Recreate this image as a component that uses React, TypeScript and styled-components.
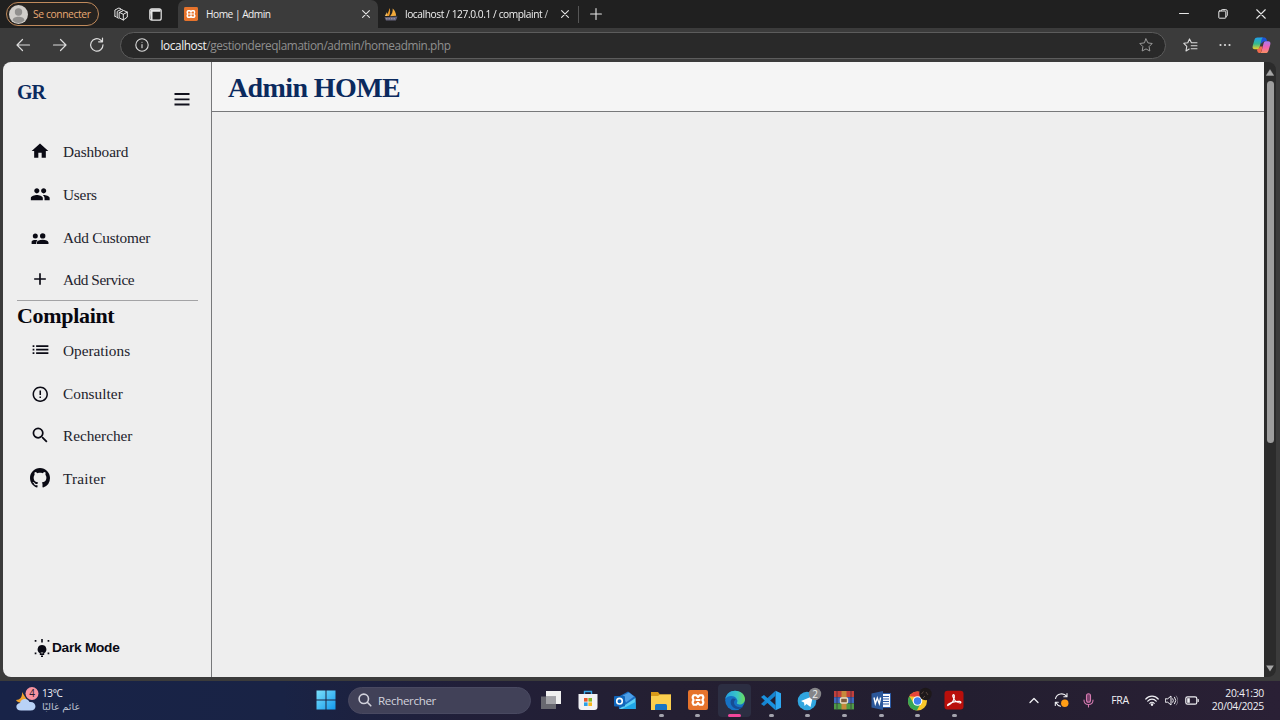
import React from 'react';
import styled, { createGlobalStyle } from 'styled-components';
import { MdHome, MdPeople, MdAdd, MdList, MdErrorOutline, MdSearch } from 'react-icons/md';
import { BsGithub } from 'react-icons/bs';

const UI = `"Open Sans", "Noto Sans", sans-serif`;
const SERIF = `"Liberation Serif", serif`;

const GlobalStyle = createGlobalStyle`
  * { box-sizing: border-box; }
  body { margin: 0; overflow: hidden; font-family: ${UI}; }
  h1, h2, p { margin: 0; }
  svg { display: block; flex: none; }
`;

const Screen = styled.div`
  width: 1280px;
  height: 720px;
  display: flex;
  flex-direction: column;
  background: #3b3b3b;
  overflow: hidden;
`;

/* Browser chrome */
const TabStrip = styled.div`
  height: 28px;
  flex: none;
  display: flex;
  align-items: center;
  background: #202020;
  color: #e6e6e6;
`;
const SignIn = styled.div`
  width: 93px;
  height: 24px;
  margin-left: 6px;
  padding-left: 2px;
  display: flex;
  align-items: center;
  gap: 5px;
  border: 1.3px solid #c08a5c;
  border-radius: 12px;
  background: #262320;
  color: #e9a873;
  font-size: 10.3px;
  letter-spacing: -0.4px;
  white-space: nowrap;
`;
const StripIcon = styled.div<{ $left: number }>`
  margin-left: ${p => p.$left}px;
`;
const Tab = styled.div<{ $active?: boolean; $width: number }>`
  width: ${p => p.$width}px;
  height: 28px;
  padding: 0 8.5px 0 6px;
  display: flex;
  align-items: center;
  border-radius: 7px 7px 0 0;
  background: ${p => (p.$active ? '#3b3b3b' : 'transparent')};
`;
const TabTitle = styled.span<{ $spacing: number; $fade?: boolean }>`
  flex: 1;
  margin: 0 4px 0 ${p => (p.$fade ? 7 : 8)}px;
  font-size: 10.2px;
  letter-spacing: ${p => p.$spacing}px;
  white-space: nowrap;
  color: #f0f0f0;
  ${p => p.$fade && 'mask-image: linear-gradient(90deg, #000 90%, rgba(0,0,0,.3));'}
`;
const Divider = styled.div`
  width: 1px;
  height: 17px;
  margin-left: 1px;
  background: #565656;
`;
const WindowButtons = styled.div`
  margin-left: auto;
  padding-right: 14px;
  display: flex;
  align-items: center;
  gap: 28.5px;
`;
const Toolbar = styled.div`
  height: 34px;
  flex: none;
  display: flex;
  align-items: center;
  padding-left: 15px;
  background: #3b3b3b;
  color: #dcdcdc;
`;
const NavButtons = styled.div`
  display: flex;
  align-items: center;
  gap: 21px;
  width: 105px;
`;
const AddressBar = styled.div`
  width: 1046px;
  height: 27px;
  padding: 0 12px 0 13.5px;
  display: flex;
  align-items: center;
  border: 1px solid #5c5c5c;
  border-radius: 14px;
  background: #292929;
`;
const Url = styled.div`
  flex: 1;
  margin-left: 12px;
  font-size: 11.8px;
  letter-spacing: -0.4px;
  color: #8f8f8f;
  b { color: #f4f4f4; font-weight: 400; }
`;
const ToolbarActions = styled.div`
  margin-left: 17px;
  display: flex;
  align-items: center;
  gap: 21px;
`;

/* Page */
const Viewport = styled.div`
  height: 615px;
  flex: none;
  margin-left: 3px;
  display: flex;
`;
const Page = styled.div`
  width: 1261px;
  display: flex;
  background: #eeeeee;
  border-radius: 8px 0 0 8px;
  overflow: hidden;
`;
const Sidebar = styled.aside`
  width: 209px;
  padding: 0 13px 0 14px;
  display: flex;
  flex-direction: column;
  border-right: 1px solid #77787a;
`;
const Brand = styled.div`
  height: 69px;
  display: flex;
  justify-content: space-between;
  color: #0b2a5e;
  font: bold 20px/30px ${SERIF};
  letter-spacing: -1px;
  padding: 15px 8.500px 0 0;
`;
const MenuIcon = styled.div`
  padding-top: 15px;
  color: #11111c;
`;
const NavList = styled.nav`
  display: flex;
  flex-direction: column;
`;
const NavItem = styled.a<{ $spacing: number }>`
  height: 42.7px;
  display: flex;
  align-items: center;
  color: #22222c;
  font: 15.3px/20px ${SERIF};
  letter-spacing: ${p => p.$spacing}px;
`;
const NavIcon = styled.span<{ $shift?: number }>`
  width: 46px;
  height: 24px;
  display: flex;
  align-items: center;
  justify-content: center;
  color: #0a0a14;
  margin-top: ${p => (p.$shift ?? 0) * 2}px;
`;
const Section = styled.h2`
  height: 30px;
  margin: -2px 0 0;
  border-top: 1px solid #a3a3a5;
  color: #07070f;
  font: bold 22px/30px ${SERIF};
  letter-spacing: -0.32px;
`;
const ModeToggle = styled.div`
  margin: auto 0 18px 17px;
  display: flex;
  align-items: center;
  gap: 2px;
  color: #0a0a14;
  font: bold 13.7px/22px "Liberation Sans", sans-serif;
  letter-spacing: -0.27px;
`;
const Main = styled.main`
  flex: 1;
`;
const MainHeader = styled.header`
  height: 50px;
  padding-left: 16px;
  background: #f5f5f5;
  border-bottom: 1px solid #77787a;
`;
const Title = styled.h1`
  color: #0b2a5e;
  font: bold 28px/52px ${SERIF};
  letter-spacing: -0.6px;
`;
const ScrollRail = styled.div`
  width: 12px;
  padding: 7px 0 5px;
  display: flex;
  flex-direction: column;
  align-items: center;
  background: #2b2b2b;
  border-radius: 0 8px 8px 0;
`;
const Thumb = styled.div`
  width: 7px;
  height: 362px;
  margin: 5px 0 auto;
  border-radius: 4px;
  background: #9d9d9d;
`;

/* Taskbar */
const Taskbar = styled.footer`
  height: 39px;
  margin-top: auto;
  padding-bottom: 1px;
  display: flex;
  align-items: center;
  background: linear-gradient(90deg, #182348 0%, #192345 22%, #211f39 36%, #241f32 52%, #231e30 75%, #2a2035 100%);
  color: #f0f0f4;
`;
const Weather = styled.div`
  width: 298px;
  padding-left: 15px;
  display: flex;
  align-items: center;
  gap: 3px;
`;
const WeatherText = styled.div`
  display: flex;
  flex-direction: column;
  font-size: 10px;
  line-height: 13px;
  letter-spacing: -0.4px;
  span { font-family: "DejaVu Sans", sans-serif; font-size: 9.8px; color: #bfc3d2; letter-spacing: 0; }
`;
const StartButton = styled.div`
  width: 50px;
  display: flex;
  padding-left: 18px;
`;
const SearchBox = styled.div`
  width: 183px;
  height: 27px;
  margin-right: 2px;
  padding-left: 8.500px;
  display: flex;
  align-items: center;
  gap: 6.500px;
  border: 1px solid #494961;
  border-radius: 14px;
  background: #414158;
  color: #d2d2dc;
  font-size: 11.6px;
  letter-spacing: -0.35px;
`;
const Apps = styled.div`
  display: flex;
`;
const AppButton = styled.div<{ $active?: boolean }>`
  width: 32.65px;
  height: 33px;
  margin: 0 2px;
  padding-top: 6px;
  display: flex;
  flex-direction: column;
  align-items: center;
  border-radius: 4px;
  background: ${p => (p.$active ? '#2c2e42' : 'transparent')};
`;
const Indicator = styled.i<{ $active?: boolean }>`
  width: ${p => (p.$active ? 13 : 5)}px;
  height: 3px;
  margin-top: 3px;
  border-radius: 2px;
  background: ${p => (p.$active ? '#f0479b' : '#a3a3ad')};
`;
const Tray = styled.div`
  margin-left: auto;
  padding-right: 16px;
  display: flex;
  align-items: center;
`;
const TrayItem = styled.div<{ $w: number }>`
  width: ${p => p.$w}px;
  display: flex;
  justify-content: center;
  font-size: 10.5px;
  letter-spacing: -0.3px;
`;
const Clock = styled.div`
  width: 60px;
  text-align: right;
  font-size: 10.4px;
  line-height: 13px;
  letter-spacing: -0.3px;
`;

const line = { fill: 'none', stroke: 'currentColor', strokeLinecap: 'round', strokeLinejoin: 'round' } as const;

const Close = ({ size = 8, w = 1.1 }) => (
  <svg width={size} height={size} viewBox="0 0 8 8" {...line} strokeWidth={w}><path d="M.6.6l6.8 6.8M7.4.6L.6 7.4" /></svg>
);
const Xampp = ({ size }: { size: number }) => (
  <svg width={size} height={size} viewBox="0 0 20 20">
    <rect width="20" height="20" rx="2" fill="#e6732c" />
    <path d="M10 7.200L8.600 5.300H5.600Q3.600 7.600 5.700 10Q3.600 12.400 5.600 14.700H8.600L10 12.800L11.400 14.700H14.400Q16.400 12.400 14.300 10Q16.400 7.600 14.400 5.300H11.400ZM8.400 10H11.600" {...line} stroke="#fff" strokeWidth="2.100" />
  </svg>
);
const PhpMyAdmin = () => (
  <svg width="14" height="14" viewBox="0 0 14 14">
    <path d="M5.500 1c1 2.300.9 5-.4 8H1.200C3.500 7.200 5 4.500 5.500 1z" fill="#e99a2c" />
    <path d="M8.700 1.600c2.200 2 3.200 4.400 3.500 7.200L6 9.200c2-2 2.900-4.600 2.700-7.600z" fill="#f2a93a" />
    <path d="M2.800 5L1 9h2z" fill="#f6c46b" />
    <path d="M.5 10.200l13-.8-1.600 4H2z" fill="#66647c" />
    <path d="M2 11.800h10" stroke="#9c9aae" strokeWidth="1.100" strokeDasharray="1.500 1" />
  </svg>
);
const Copilot = () => (
  <svg width="19" height="19" viewBox="0 0 20 19">
    <defs>
      <linearGradient id="cpA" x1="0" y1="0" x2="0" y2="1"><stop stopColor="#1f9fee" /><stop offset=".55" stopColor="#36b98c" /><stop offset="1" stopColor="#f5cf27" /></linearGradient>
      <linearGradient id="cpB" x1="0" y1="0" x2="0" y2="1"><stop stopColor="#a879f0" /><stop offset=".5" stopColor="#ee62b4" /><stop offset="1" stopColor="#fb9061" /></linearGradient>
    </defs>
    <path d="M9 1h4c1.500 0 2 1 2.400 2.300L16 5h-3.500L9 8z" fill="#1c55d8" />
    <path d="M5.800 1H12c-1.300.3-1.700 1.500-2.100 3L8.200 10.500C7.700 12.500 7 13.500 5 13.500H3C.8 13.500.2 12 .8 9.800L2.600 3.500C3.100 1.800 4 1 5.800 1z" fill="url(#cpA)" />
    <path d="M14.300 5H17c2.200 0 2.800 1.600 2.200 3.800l-1.800 6c-.5 1.800-1.400 2.700-3.200 2.700H8.300c1.200-.4 1.600-1.600 2-3L12 8c.4-1.900.9-3 2.300-3z" fill="url(#cpB)" />
    <path d="M5 13.500c2 0 2.700-1 3.200-3h3L10 15c-.4 1.500-.9 2.500-2.300 2.500-1.500 0-1.900-1.200-2.700-4z" fill="#f06b4e" />
  </svg>
);
const Bulb = () => (
  <svg width="16" height="20" viewBox="0 0 16 20" fill="#0a0a14">
    <path d="M8 7a4.400 4.400 0 0 0-2.200 8.200V17h4.400v-1.800A4.400 4.400 0 0 0 8 7z" />
    <path d="M7 17.500h2V19H7zM7.200 1h1.600v3.500H7.200zM.7 2h1.700v1.700H.7zM13.600 2h1.700v1.700h-1.700zM.7 14.500h1.700v1.700H.7zM13.600 14.500h1.700v1.700h-1.700z" />
    <path d="M6.800 14.300h2.400v1.200H6.800z" fill="#999" />
  </svg>
);
const AddCustomer = () => (
  <svg width="18" height="13" viewBox="0 0 18 13" fill="currentColor">
    <circle cx="4.300" cy="3.900" r="2.500" /><circle cx="11.700" cy="3.900" r="2.700" />
    <path d="M.6 12V9.600C1.300 8.400 2.600 8 4.300 8c1 0 1.600.1 2.200.4C5.300 9.300 5 10.500 5 12zM5.700 12v-1.500C6.300 8.600 8.600 7.700 11.700 7.700s5.400.9 5.800 2.800V12z" />
  </svg>
);

const primary = [
  { label: 'Dashboard', icon: <MdHome size={20} />, shift: -1, spacing: -0.1 },
  { label: 'Users', icon: <MdPeople size={20.5} />, shift: -1, spacing: -0.2 },
  { label: 'Add Customer', icon: <AddCustomer />, shift: 0.5, spacing: -0.2 },
  { label: 'Add Service', icon: <MdAdd size={20} />, shift: -1, spacing: -0.45 },
];
const complaint = [
  { label: 'Operations', icon: <MdList size={21} />, shift: -1.2, spacing: 0 },
  { label: 'Consulter', icon: <MdErrorOutline size={18.5} />, shift: 0.7, spacing: 0.03 },
  { label: 'Rechercher', icon: <MdSearch size={20.5} />, shift: -1.2, spacing: -0.02 },
  { label: 'Traiter', icon: <BsGithub size={20} />, shift: -0.8, spacing: 0.2 },
];

const apps: { name: string; icon: React.ReactNode; running?: boolean; active?: boolean }[] = [
  { name: 'tasks', icon: <><rect x="6" y="1" width="15" height="13" fill="#f0f0f0" /><rect x="1" y="6.500" width="15" height="12.500" fill="#686870" /><path d="M6 6.500h10V14H6z" fill="#a3a3a8" /></> },
  { name: 'store', icon: <><path d="M7.500 5V1.500h7V5" fill="none" stroke="#37a7e8" strokeWidth="1.400" /><path d="M1.500 4h19v13c0 2-1 3-3 3h-13c-2 0-3-1-3-3z" fill="#f1f2f5" /><path d="M7 8h3.600v3.600H7z" fill="#e8562c" /><path d="M11.400 8H15v3.600h-3.600z" fill="#82b727" /><path d="M7 12.400h3.600V16H7z" fill="#2aa0e6" /><path d="M11.400 12.400H15V16h-3.600z" fill="#f8b71a" /></> },
  { name: 'outlook', icon: <><path d="M4 7l10-5.500L21.500 7v12H5z" fill="#1b6fc4" /><path d="M9 5.500l6-3 5 4-8 6z" fill="#4d9fe8" /><path d="M5 19L21.500 8v11z" fill="#5bd0f5" /><path d="M8 19l13.500-7v7z" fill="#1fa5e6" /><rect x="0" y="6" width="11" height="10.500" rx="1" fill="#1065ba" /><circle cx="5.500" cy="11.200" r="2.800" fill="none" stroke="#fff" strokeWidth="1.600" /></> },
  { name: 'files', running: true, icon: <><path d="M1 2h7l2 2.500h11V8H1z" fill="#d99a18" /><path d="M1 6h7l2-1.500h11V20H1z" fill="#fbcf4f" /><path d="M5 20v-4.500q0-1.500 1.500-1.500h9q1.500 0 1.500 1.500V20z" fill="#1875c4" /></> },
  { name: 'xampp', running: true, icon: <svg x="1" y="0" width="20" height="20"><Xampp size={20} /></svg> },
  { name: 'edge', running: true, active: true, icon: <>
    <defs><linearGradient id="edA" x1="0" x2="1"><stop stopColor="#239fe3" /><stop offset=".6" stopColor="#39c6c6" /><stop offset="1" stopColor="#6cdf57" /></linearGradient></defs>
    <circle cx="11" cy="10.500" r="9.800" fill="#1672c4" />
    <path d="M1.300 9C2 4 6 .7 11 .7c6 0 10 4 10 8.300 0 3.500-2.600 5.500-5.400 5.500-1.800 0-3-.7-2.700-1.700.4-1 .7-1.400.4-2.600C12.700 7.500 10 6 7 6 4.500 6 2.500 7 1.300 9z" fill="url(#edA)" />
    <path d="M7 10c-1.500 4 1.500 8.500 6.500 9 2.800.2 4.600-1 5.700-2.500-5 2-9.200-.7-9.200-4 0-1.700 1-2.500 1.800-3C9.700 7.700 7.700 8.500 7 10z" fill="#174d94" />
  </> },
  { name: 'code', running: true, icon: <><path d="M15.500.8L21 3.200v14.600l-5.500 2.400z" fill="#2da8f2" /><path d="M15.500.8v5L4 16 1 14z" fill="#1684d0" /><path d="M15.500 20.200v-5L4 5 1 7z" fill="#1991df" /></> },
  { name: 'telegram', running: true, icon: <><circle cx="10" cy="11" r="9.300" fill="#30a5df" /><path d="M4 11l12-5-2.500 11-4-3-2 2-.5-3.500z" fill="#fff" /><circle cx="18" cy="4" r="6.200" fill="#858589" /><text x="18" y="7.800" textAnchor="middle" fontSize="10" fill="#eee">2</text></> },
  { name: 'winrar', running: true, icon: <><rect x="1" y="1" width="20" height="6" fill="#c4403b" /><rect x="1" y="7.200" width="20" height="6" fill="#3f68c0" /><rect x="1" y="13.400" width="20" height="6" fill="#4f9c45" /><rect x="8.500" y="1" width="5" height="18.400" fill="#c68a3b" /><rect x="7.500" y="8" width="7" height="5" rx="1" fill="#7d5a3c" stroke="#e9ddc5" strokeWidth="1.400" /><path d="M4 1v18M18 1v18" stroke="#302842" strokeWidth=".7" /></> },
  { name: 'word', running: true, icon: <><rect x="10" y="3.500" width="10.500" height="14" fill="#f7f9fd" stroke="#2c5ba6" /><path d="M13 6.500h6M13 9h6M13 11.500h6M13 14h6" stroke="#2c5ba6" /><path d="M1.500 3.500L13 1v19L1.500 17.500z" fill="#2b579a" /><path d="M4 7.500l1.300 6.200L7.300 8l2 5.700 1.300-6.200" fill="none" stroke="#fff" strokeWidth="1.400" /></> },
  { name: 'chrome', running: true, icon: <><circle cx="10.500" cy="11" r="9.500" fill="#f8c72b" /><path d="M2.300 6.200A9.500 9.500 0 0 1 18.700 6.200L10.500 7z" fill="#e6463b" /><path d="M2.300 6.200a9.500 9.500 0 0 0 7.500 14.300l3.500-6.500-6.500-.5z" fill="#37a755" /><circle cx="10.500" cy="11" r="4.800" fill="#fff" /><circle cx="10.500" cy="11" r="3.700" fill="#3e80ed" /><circle cx="18.500" cy="4" r="6.200" fill="#1d181a" /><path d="M14.500 4l2-2.500M19 2l2 3M16 8l2-2" stroke="#584740" /></> },
  { name: 'acrobat', running: true, icon: <><rect x="1.500" y=".8" width="19" height="18.700" rx="3" fill="#b90f0b" /><path d="M5 15.500c4-1.500 7-6.500 6.300-9.800-.4-2-2-.8-1.400 1 1 3.300 4 6 7 6.300 1.500 0 1.300-1.600-.4-1.700-4-.1-8.500 1-11.300 3-.9.700-.6 1.400-.2 1.200z" fill="none" stroke="#fff" strokeWidth="1.200" /></> },
];

export default function App() {
  return (
    <Screen>
      <GlobalStyle />
      <TabStrip>
        <SignIn>
          <svg width="19" height="19" viewBox="0 0 19 19"><circle cx="9.500" cy="9.500" r="9.500" fill="#d0ceca" /><circle cx="9.500" cy="7" r="3.700" fill="#91908e" /><path d="M3.500 15.500C4 12.500 6.500 11.800 9.500 11.800s5.500.7 6 3.700q-6 5-12 0z" fill="#91908e" /></svg>
          Se connecter
        </SignIn>
        <StripIcon $left={15}>
          <svg width="14" height="14" viewBox="0 0 14 14" {...line} strokeWidth="1"><path d="M5.500 5.400l4-1.900 3.800 1.600v5l-4 2.900-3.800-2zM5.500 5.400l3.800 1.900 4-2.200M9.300 7.300V13M3.200 10.500V4.400l4-2 1.800.8M.9 9.200V3l4-2 1.800.8M.9 9.200l1.200.7M3.200 10.500l1.200.7" /></svg>
        </StripIcon>
        <StripIcon $left={21}>
          <svg width="13" height="13" viewBox="0 0 13 13" {...line} strokeWidth="1.200"><rect x=".8" y=".8" width="11.400" height="11.400" rx="2" /><path d="M1.500 1.200h10v2.500h-10zM1 3.500h2.500V12H2z" fill="currentColor" stroke="none" /></svg>
        </StripIcon>
        <StripIcon $left={16} />
        <Tab $active $width={200}>
          <Xampp size={14} />
          <TabTitle $spacing={-0.5}>Home | Admin</TabTitle>
          <Close />
        </Tab>
        <Tab $width={199}>
          <PhpMyAdmin />
          <TabTitle $spacing={-0.42} $fade>localhost / 127.0.0.1 / complaint /</TabTitle>
          <Close />
        </Tab>
        <Divider />
        <StripIcon $left={11}>
          <svg width="12" height="12" viewBox="0 0 12 12" {...line} strokeWidth="1.100"><path d="M6 .6v10.800M.6 6h10.800" /></svg>
        </StripIcon>
        <WindowButtons>
          <svg width="10" height="10" viewBox="0 0 10 10" {...line}><path d="M.5 4.500h9" /></svg>
          <svg width="10" height="10" viewBox="0 0 10 10" {...line}><rect x=".8" y="2" width="7" height="7.200" rx=".6" /><path d="M3 1.800Q3 .6 4.200.6h3.500Q9.300.6 9.300 2.200v4q0 1.200-1.300 1.400" /></svg>
          <Close size={10} w={0.9} />
        </WindowButtons>
      </TabStrip>
      <Toolbar>
        <NavButtons>
          <svg width="16" height="14" viewBox="0 0 16 14" {...line} strokeWidth="1.200"><path d="M14.500 7H2M7.500 1.500L2 7l5.500 5.500" /></svg>
          <svg width="16" height="14" viewBox="0 0 16 14" {...line} strokeWidth="1.200"><path d="M1.500 7H14M8.500 1.500L14 7l-5.500 5.500" /></svg>
          <svg width="16" height="16" viewBox="0 0 16 16" {...line} strokeWidth="1.200"><path d="M14 7.800A6.200 6.200 0 1 1 11.800 3.200L13.300 4.700M13.500 1v3.800H9.600" /></svg>
        </NavButtons>
        <AddressBar>
          <svg width="14" height="14" viewBox="0 0 14 14" {...line} strokeWidth="1.100"><circle cx="7" cy="7" r="6.200" /><path d="M7 6.500v3.300M7 4.200v.1" /></svg>
          <Url><b>localhost</b>/gestiondereqlamation/admin/homeadmin.php</Url>
          <svg width="14" height="14" viewBox="0 0 14 14" {...line} stroke="#9a9a9a"><path d="M7 .9l1.900 4 4.300.6-3.100 3.100.7 4.400L7 10.900 3.200 13l.7-4.400L.8 5.500l4.300-.6z" /></svg>
        </AddressBar>
        <ToolbarActions>
          <svg width="15" height="14" viewBox="0 0 15 14" {...line} strokeWidth="1.100"><path d="M9 4.700L8.300 4.600 6.500.9 4.800 4.700.8 5.300l3 3-.8 4.600 3.200-1.800M9 4.800h5M8.200 7.800H14M8.200 10.800H14" /></svg>
          <svg width="12" height="4" viewBox="0 0 12 4" fill="currentColor"><circle cx="1.500" cy="2" r="1.100" /><circle cx="6" cy="2" r="1.100" /><circle cx="10.500" cy="2" r="1.100" /></svg>
          <Copilot />
        </ToolbarActions>
      </Toolbar>

      <Viewport>
        <Page>
          <Sidebar>
            <Brand>
              GR
              <MenuIcon>
                <svg width="16" height="14" viewBox="0 0 16 14"><path d="M.5 2h15M.5 7.300h15M.5 12.500h15" stroke="currentColor" strokeWidth="1.800" /></svg>
              </MenuIcon>
            </Brand>
            <NavList>
              {primary.map(n => <NavItem key={n.label} $spacing={n.spacing}><NavIcon $shift={n.shift}>{n.icon}</NavIcon>{n.label}</NavItem>)}
            </NavList>
            <Section>Complaint</Section>
            <NavList>
              {complaint.map(n => <NavItem key={n.label} $spacing={n.spacing}><NavIcon $shift={n.shift}>{n.icon}</NavIcon>{n.label}</NavItem>)}
            </NavList>
            <ModeToggle><Bulb />Dark Mode</ModeToggle>
          </Sidebar>
          <Main>
            <MainHeader><Title>Admin HOME</Title></MainHeader>
          </Main>
        </Page>
        <ScrollRail>
          <svg width="8" height="7" viewBox="0 0 8 7"><path d="M4 .5L7.800 6.500H.2z" fill="#a6a6a6" stroke="#a6a6a6" strokeLinejoin="round" strokeWidth=".4" /></svg>
          <Thumb />
          <svg width="8" height="7" viewBox="0 0 8 7"><path d="M4 6.500L7.800.5H.2z" fill="#a6a6a6" /></svg>
        </ScrollRail>
      </Viewport>

      <Taskbar>
        <Weather>
          <svg width="24" height="26" viewBox="0 0 24 26">
            <path d="M7 5c.5 5-2 8-6 8 2 4 9 3 11 0z" fill="#f0a12c" />
            <path d="M6 23.500c-6 0-6-7-1-7.500 1-5 8-5 9.500-1 7-1 8.500 8.500 1 8.500z" fill="#b9d2f7" />
            <circle cx="17" cy="6.500" r="6.500" fill="#f793a0" />
            <text x="17" y="10.100" textAnchor="middle" fontSize="10" fill="#241b2b">4</text>
          </svg>
          <WeatherText>13°C<span dir="rtl">غائم غالبًا</span></WeatherText>
        </Weather>
        <StartButton>
          <svg width="20" height="20" viewBox="0 0 20 20">
            <defs><linearGradient id="win" x1="0" y1="0" x2="1" y2="1"><stop stopColor="#7be0fb" /><stop offset="1" stopColor="#1399ec" /></linearGradient></defs>
            <path d="M.5.500h9v9h-9zM10.500.500h9v9h-9zM.5 10.500h9v9h-9zM10.500 10.500h9v9h-9z" fill="url(#win)" />
          </svg>
        </StartButton>
        <SearchBox>
          <svg width="14" height="14" viewBox="0 0 14 14" {...line} strokeWidth="1.600"><circle cx="5.800" cy="5.800" r="4.700" /><path d="M9.300 9.300l3.500 3.500" /></svg>
          Rechercher
        </SearchBox>
        <Apps>
          {apps.map(a => (
            <AppButton key={a.name} $active={a.active}>
              <svg width="22" height="21" viewBox="0 0 22 21" overflow="visible">{a.icon}</svg>
              {a.running && <Indicator $active={a.active} />}
            </AppButton>
          ))}
        </Apps>
        <Tray>
          <TrayItem $w={26}><svg width="10" height="7" viewBox="0 0 10 7" {...line} strokeWidth="1.300"><path d="M1 5.500l4-4 4 4" /></svg></TrayItem>
          <TrayItem $w={28}><svg width="15" height="16" viewBox="0 0 15 16" {...line} strokeWidth="1.100"><path d="M1.500 6.500C3 1.500 9.500.2 12.800 4.500M13 1.500v3.200H9.800M6.500 14.200C4.500 13.800 3 12.500 2.300 11M1.300 13.500V10.300h3" /><circle cx="10.800" cy="11.300" r="3.700" fill="#ff9d16" stroke="none" /></svg></TrayItem>
          <TrayItem $w={26}><svg width="11" height="15" viewBox="0 0 11 15" {...line} strokeWidth="1.100" stroke="#d47ab0"><rect x="3.500" y=".8" width="4" height="8.500" rx="2" fill="#79406b" /><path d="M1 7c0 6 9 6 9 0M5.500 11.500V14" /></svg></TrayItem>
          <TrayItem $w={38}>FRA</TrayItem>
          <TrayItem $w={25}><svg width="14" height="11" viewBox="0 0 14 11" {...line} strokeWidth="1.200"><path d="M.8 4C4 .2 10 .2 13.200 4M2.800 6.200c2.300-2.700 6.100-2.700 8.400 0M4.800 8.300c1.200-1.400 3.200-1.400 4.400 0" /><circle cx="7" cy="9.600" r=".7" fill="currentColor" /></svg></TrayItem>
          <TrayItem $w={15}><svg width="13" height="11" viewBox="0 0 13 11" {...line}><path d="M.7 3.800h2L6 1v9L2.700 7.200h-2zM7.800 3.700q1.300 1.800 0 3.600M9.600 2.200q2.600 3.300 0 6.600" /><path d="M11.300 1q3.400 4.500 0 9" opacity=".4" /></svg></TrayItem>
          <TrayItem $w={25}><svg width="14" height="9" viewBox="0 0 14 9" {...line} strokeWidth="1.200"><rect x=".8" y=".8" width="11" height="7.400" rx="1.800" /><path d="M13.200 3.500v2" /><path d="M2.200 2.200h2.600v4.600H2.200z" fill="currentColor" stroke="none" /></svg></TrayItem>
          <Clock>20:41:30<br />20/04/2025</Clock>
        </Tray>
      </Taskbar>
    </Screen>
  );
}
